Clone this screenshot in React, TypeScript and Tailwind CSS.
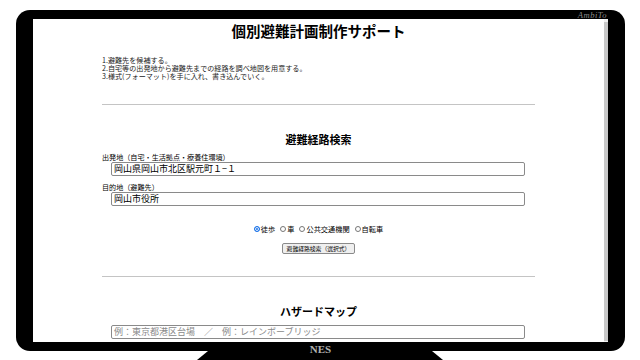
const jp = "font-['Noto_Sans_CJK_JP','Noto_Sans',sans-serif]"

function Radio({ label, checked }: { label: string; checked?: boolean }) {
  return (
    <label className="flex items-center gap-[1px]">
      {checked ? (
        <span className="w-[6px] h-[6px] rounded-full bg-[#1a73e8] border-[1.5px] border-[#1a73e8] shadow-[inset_0_0_0_1px_white]"></span>
      ) : (
        <span className="w-[6px] h-[6px] rounded-full border border-[#767676] bg-white"></span>
      )}
      <span>{label}</span>
    </label>
  )
}

export default function App() {
  const steps = [
    "1.避難先を候補する。",
    "2.自宅等の出発地から避難先までの経路を調べ地図を用意する。",
    "3.様式(フォーマット)を手に入れ、書き込んでいく。",
  ]

  return (
    <div className={`w-[640px] h-[360px] bg-white overflow-hidden ${jp}`}>
      <div className="pt-[10px] pl-[16px]">
        {/* monitor frame */}
        <div className="w-[609px] h-[341px] bg-black rounded-[14px] px-[17px] flex flex-col">
          <div className="h-[9px] flex justify-end items-center pr-[1px]">
            <span className="font-['Liberation_Serif',serif] italic text-[8.5px] leading-[8px] tracking-[0.5px] text-[#8a8a8a]">AmbiTo</span>
          </div>

          {/* screen */}
          <div className="h-[323px] bg-white flex">
            <div className="flex-1 px-[69px] text-black">
              <h1 className="mt-[3px] text-center font-bold text-[14.5px] leading-[18px]">個別避難計画制作サポート</h1>

              <div className="mt-[16px] text-[7.1px] text-[#222]">
                {steps.map((s) => (
                  <p key={s} className="h-[8px] leading-[8px]">{s}</p>
                ))}
              </div>

              <div className="mt-[24px] border-t border-[#c4c4c4]"></div>

              <h2 className="mt-[27px] text-center font-bold text-[11px] leading-[14px]">避難経路検索</h2>

              <p className="mt-[7px] text-[7.1px] leading-[9px]">出発地（自宅・生活拠点・療養住環境）</p>
              <div className="ml-[9px] mr-[10px] h-[14px] border border-[#8a8a8a] rounded-[2px] flex items-center px-[2px] text-[9px] leading-[10px]">
                岡山県岡山市北区駅元町１−１
              </div>

              <p className="mt-[7px] text-[7.1px] leading-[9px]">目的地（避難先）</p>
              <div className="ml-[9px] mr-[10px] h-[14px] border border-[#8a8a8a] rounded-[2px] flex items-center px-[2px] text-[9px] leading-[10px]">
                岡山市役所
              </div>

              <div className="mt-[18px] h-[10px] flex justify-center items-center gap-[5px] text-[7.2px] leading-[10px]">
                <Radio label="徒歩" checked />
                <Radio label="車" />
                <Radio label="公共交通機関" />
                <Radio label="自転車" />
              </div>

              <div className="mt-[9px] flex justify-center">
                <button className="h-[11px] px-[4px] bg-[#efefef] border border-[#8a8a8a] rounded-[2px] text-[5.8px] leading-[9px] text-black">
                  避難経路検索（選択式）
                </button>
              </div>

              <div className="mt-[22px] border-t border-[#c4c4c4]"></div>

              <h2 className="mt-[27px] text-center font-bold text-[11px] leading-[14px]">ハザードマップ</h2>

              <div className="mt-[7px] ml-[9px] mr-[10px] h-[14px] border border-[#8a8a8a] rounded-[2px] flex items-center px-[2px] text-[9px] leading-[10px] text-[#8a8a8a]">
                例：東京都港区台場　／　例：レインボーブリッジ
              </div>
            </div>

            {/* scrollbar */}
            <div className="w-[4px] bg-[#f1f1f1] pt-[3px] pb-[1px]">
              <div className="h-full bg-[#c8c8c8]"></div>
            </div>
          </div>

          <div className="h-[9px] flex justify-center items-start">
            <span className="font-['Liberation_Serif',serif] font-bold text-[11px] leading-[10px] mt-[2px] text-[#b0b0b0] relative z-10">NES</span>
          </div>
        </div>
      </div>

      {/* stand */}
      <svg width="640" height="9" className="block">
        <polygon points="208,0 432,0 443,9 197,9" fill="black" />
      </svg>
    </div>
  )
}
